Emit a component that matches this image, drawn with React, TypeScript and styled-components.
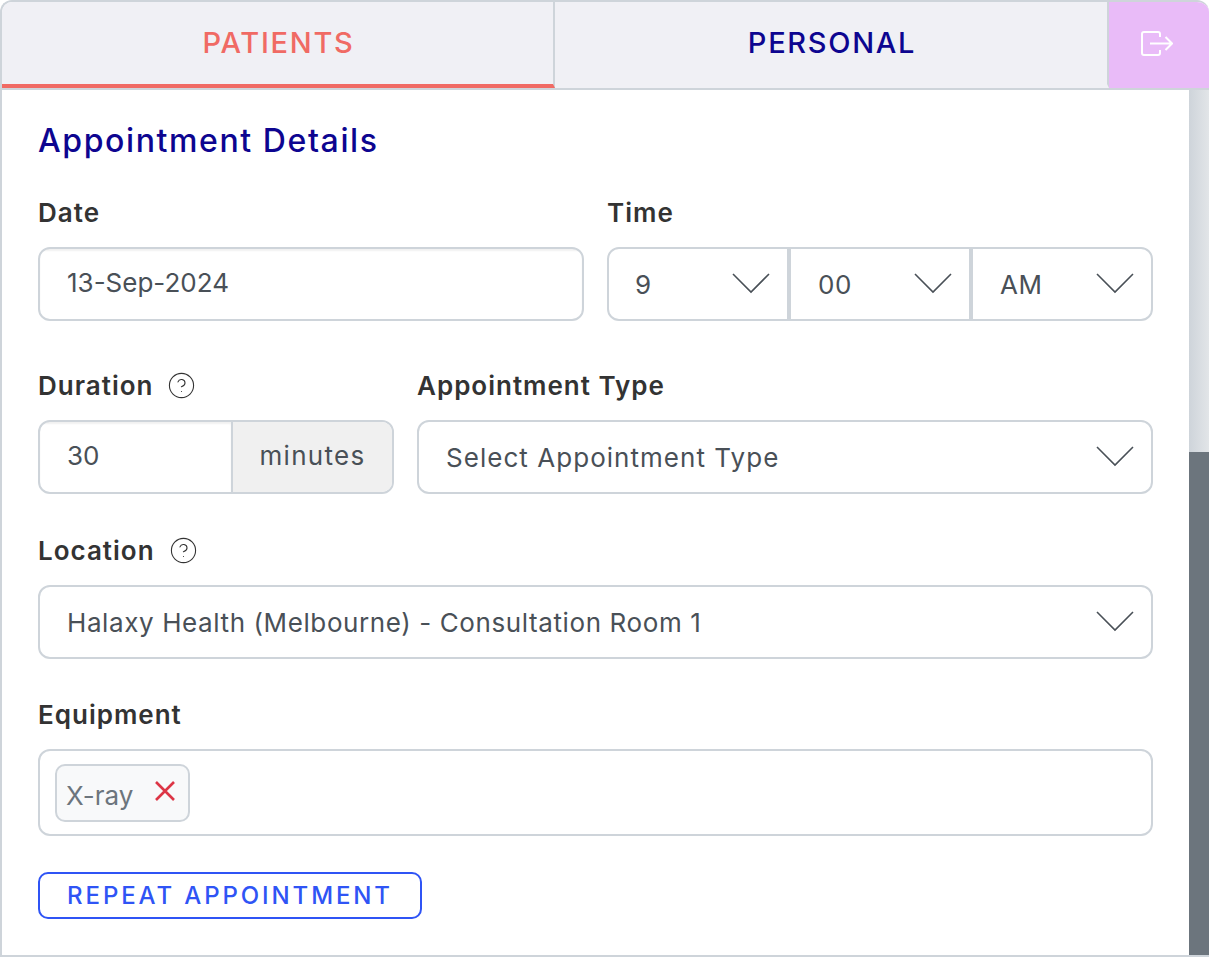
import React from 'react'
import styled, { createGlobalStyle } from 'styled-components'
import { CircleHelp } from 'lucide-react'

const GlobalStyle = createGlobalStyle`
  html, body { margin: 0; padding: 0; background: #fff; }
  body { font-family: "Inter", "Liberation Sans", sans-serif; overflow: hidden; }
  * { box-sizing: border-box; }
`

const Panel = styled.div`
  width: 1209px;
  height: 957px;
  display: flex;
  flex-direction: column;
  border: 2px solid #ced4da;
  border-right: 0;
  border-radius: 12px 12px 0 0;
  overflow: hidden;
`

const TabBar = styled.div`
  display: flex;
  height: 88px;
  flex: none;
  border-bottom: 2px solid #ced4da;
`

const Tab = styled.div<{ $active?: boolean }>`
  flex: none;
  width: ${p => (p.$active ? '553px' : '554px')};
  display: flex;
  align-items: center;
  justify-content: center;
  padding: 0 0 1px 2px;
  background: #f0f0f5;
  font-size: 29px;
  font-weight: 500;
  letter-spacing: 1.7px;
  color: ${p => (p.$active ? '#f06a64' : '#0d0590')};
  border-bottom: 4px solid ${p => (p.$active ? '#f06a64' : '#f0f0f5')};
  border-right: 2px solid #ced4da;
`

const LogoutTab = styled.div`
  flex: 1;
  display: flex;
  align-items: center;
  justify-content: center;
  padding: 0 5px 4px 0;
  background: #e9bbf8;
`

const Body = styled.div`
  flex: 1;
  display: flex;
  min-height: 0;
`

const Content = styled.div`
  flex: 1;
  padding: 30px 36px 0;
`

const ScrollTrack = styled.div`
  flex: none;
  width: 20px;
  display: flex;
  flex-direction: column;
  background: #6c757d;
`

const ScrollThumb = styled.div`
  height: 362px;
  background: linear-gradient(to right, #ced4da, #e2e5e8);
`

const Title = styled.h2`
  margin: 0 0 32px;
  font-size: 32px;
  line-height: 42px;
  font-weight: 500;
  letter-spacing: 1.6px;
  color: #0d0590;
`

const Row = styled.div<{ $gap?: number }>`
  display: flex;
  gap: 23px;
  margin-bottom: ${p => p.$gap ?? 0}px;
`

const Field = styled.div<{ $width?: number }>`
  ${p => (p.$width ? `width: ${p.$width}px; flex: none;` : 'flex: 1;')}
  min-width: 0;
`

const Label = styled.label`
  display: flex;
  align-items: center;
  gap: 14px;
  height: 36px;
  margin-bottom: 17px;
  font-size: 26px;
  font-weight: 600;
  letter-spacing: 1px;
  color: #333;
`

const Box = styled.div<{ $tall?: boolean }>`
  display: flex;
  align-items: center;
  height: ${p => (p.$tall ? '87px' : '74px')};
  border: 2px solid #ced4da;
  border-radius: 12px;
  background: #fff;
  color: #495057;
  font-size: 26px;
  overflow: hidden;
`

const InputValue = styled.div<{ $lift: number }>`
  flex: 1;
  height: 100%;
  display: flex;
  align-items: center;
  padding: 0 0 ${p => p.$lift}px 27px;
  box-shadow: inset 0 2px 2px rgba(0, 0, 0, 0.06);
`

const TimeCell = styled.div<{ $width: number; $indent: number; $last?: boolean }>`
  display: flex;
  align-items: center;
  justify-content: space-between;
  width: ${p => p.$width}px;
  flex: none;
  height: 100%;
  padding: 0 17px 0 ${p => p.$indent}px;
  letter-spacing: 0.6px;
  ${p => (p.$last ? '' : 'border-right: 4px solid #ced4da;')}
`

const SelectBox = styled.div<{ $spacing: number }>`
  flex: 1;
  display: flex;
  align-items: center;
  justify-content: space-between;
  padding: 0 17px 0 27px;
  letter-spacing: ${p => p.$spacing}px;
`

const Chevron = styled.svg`
  flex: none;
  margin-top: -2px;
`

const Addon = styled.div`
  flex: none;
  width: 161px;
  height: 100%;
  display: flex;
  align-items: center;
  justify-content: center;
  padding-bottom: 4px;
  background: #f0f0f0;
  border-left: 2px solid #ced4da;
  letter-spacing: 1.3px;
`

const TagList = styled.div`
  display: flex;
  padding-left: 15px;
`

const Tag = styled.div`
  display: flex;
  align-items: center;
  gap: 21px;
  height: 58px;
  padding: 0 12px 0 9px;
  background: #f8f9fa;
  border: 2px solid #ced4da;
  border-radius: 10px;
  color: #6c757d;
`

const TagText = styled.span`
  margin-top: 6px;
`

const TagRemove = styled.svg`
  margin-top: -4px;
`

const RepeatButton = styled.button`
  display: block;
  width: 384px;
  height: 47px;
  padding: 0;
  background: #fff;
  border: 2px solid #2f54f5;
  border-radius: 10px;
  color: #2f54f5;
  font-family: inherit;
  font-size: 24px;
  font-weight: 500;
  letter-spacing: 2.9px;
`

const ChevronIcon = () => (
  <Chevron width="38" height="22" viewBox="0 0 38 22" fill="none">
    <polyline points="1,2 19,20 37,2" stroke="#495057" strokeWidth="1.6" />
  </Chevron>
)

const HelpIcon = () => <CircleHelp size={29} strokeWidth={0.9} color="#333" />

const App = () => {
  return (
    <>
      <GlobalStyle />
      <Panel>
        <TabBar>
          <Tab $active>PATIENTS</Tab>
          <Tab>PERSONAL</Tab>
          <LogoutTab>
            <svg width="32" height="25" viewBox="0 0 32 25" fill="none" stroke="#fff" strokeWidth="2">
              <path d="M19 6V3A2 2 0 0 0 17 1H3A2 2 0 0 0 1 3V22A2 2 0 0 0 3 24H17A2 2 0 0 0 19 22V19" />
              <path d="M9 12.5H31M24.5 6L31 12.5L24.5 19" />
            </svg>
          </LogoutTab>
        </TabBar>
        <Body>
          <Content>
            <Title>Appointment Details</Title>
            <Row $gap={46}>
              <Field>
                <Label>Date</Label>
                <Box><InputValue $lift={3}>13-Sep-2024</InputValue></Box>
              </Field>
              <Field>
                <Label>Time</Label>
                <Box>
                  <TimeCell $width={182} $indent={26}>9<ChevronIcon /></TimeCell>
                  <TimeCell $width={182} $indent={27}>00<ChevronIcon /></TimeCell>
                  <TimeCell $width={178} $indent={27} $last>AM<ChevronIcon /></TimeCell>
                </Box>
              </Field>
            </Row>
            <Row $gap={38}>
              <Field $width={356}>
                <Label>Duration <HelpIcon /></Label>
                <Box>
                  <InputValue $lift={4}>30</InputValue>
                  <Addon>minutes</Addon>
                </Box>
              </Field>
              <Field>
                <Label>Appointment Type</Label>
                <Box><SelectBox $spacing={1.04}>Select Appointment Type<ChevronIcon /></SelectBox></Box>
              </Field>
            </Row>
            <Row $gap={37}>
              <Field>
                <Label>Location <HelpIcon /></Label>
                <Box><SelectBox $spacing={0.6}>Halaxy Health (Melbourne) - Consultation Room 1<ChevronIcon /></SelectBox></Box>
              </Field>
            </Row>
            <Row $gap={36}>
              <Field>
                <Label>Equipment</Label>
                <Box $tall>
                  <TagList>
                    <Tag>
                      <TagText>X-ray</TagText>
                      <TagRemove width="22" height="22" viewBox="0 0 22 22" stroke="#dc3545" strokeWidth="2.6">
                        <path d="M2 2L20 20M20 2L2 20" />
                      </TagRemove>
                    </Tag>
                  </TagList>
                </Box>
              </Field>
            </Row>
            <RepeatButton>REPEAT APPOINTMENT</RepeatButton>
          </Content>
          <ScrollTrack><ScrollThumb /></ScrollTrack>
        </Body>
      </Panel>
    </>
  )
}

export default App
